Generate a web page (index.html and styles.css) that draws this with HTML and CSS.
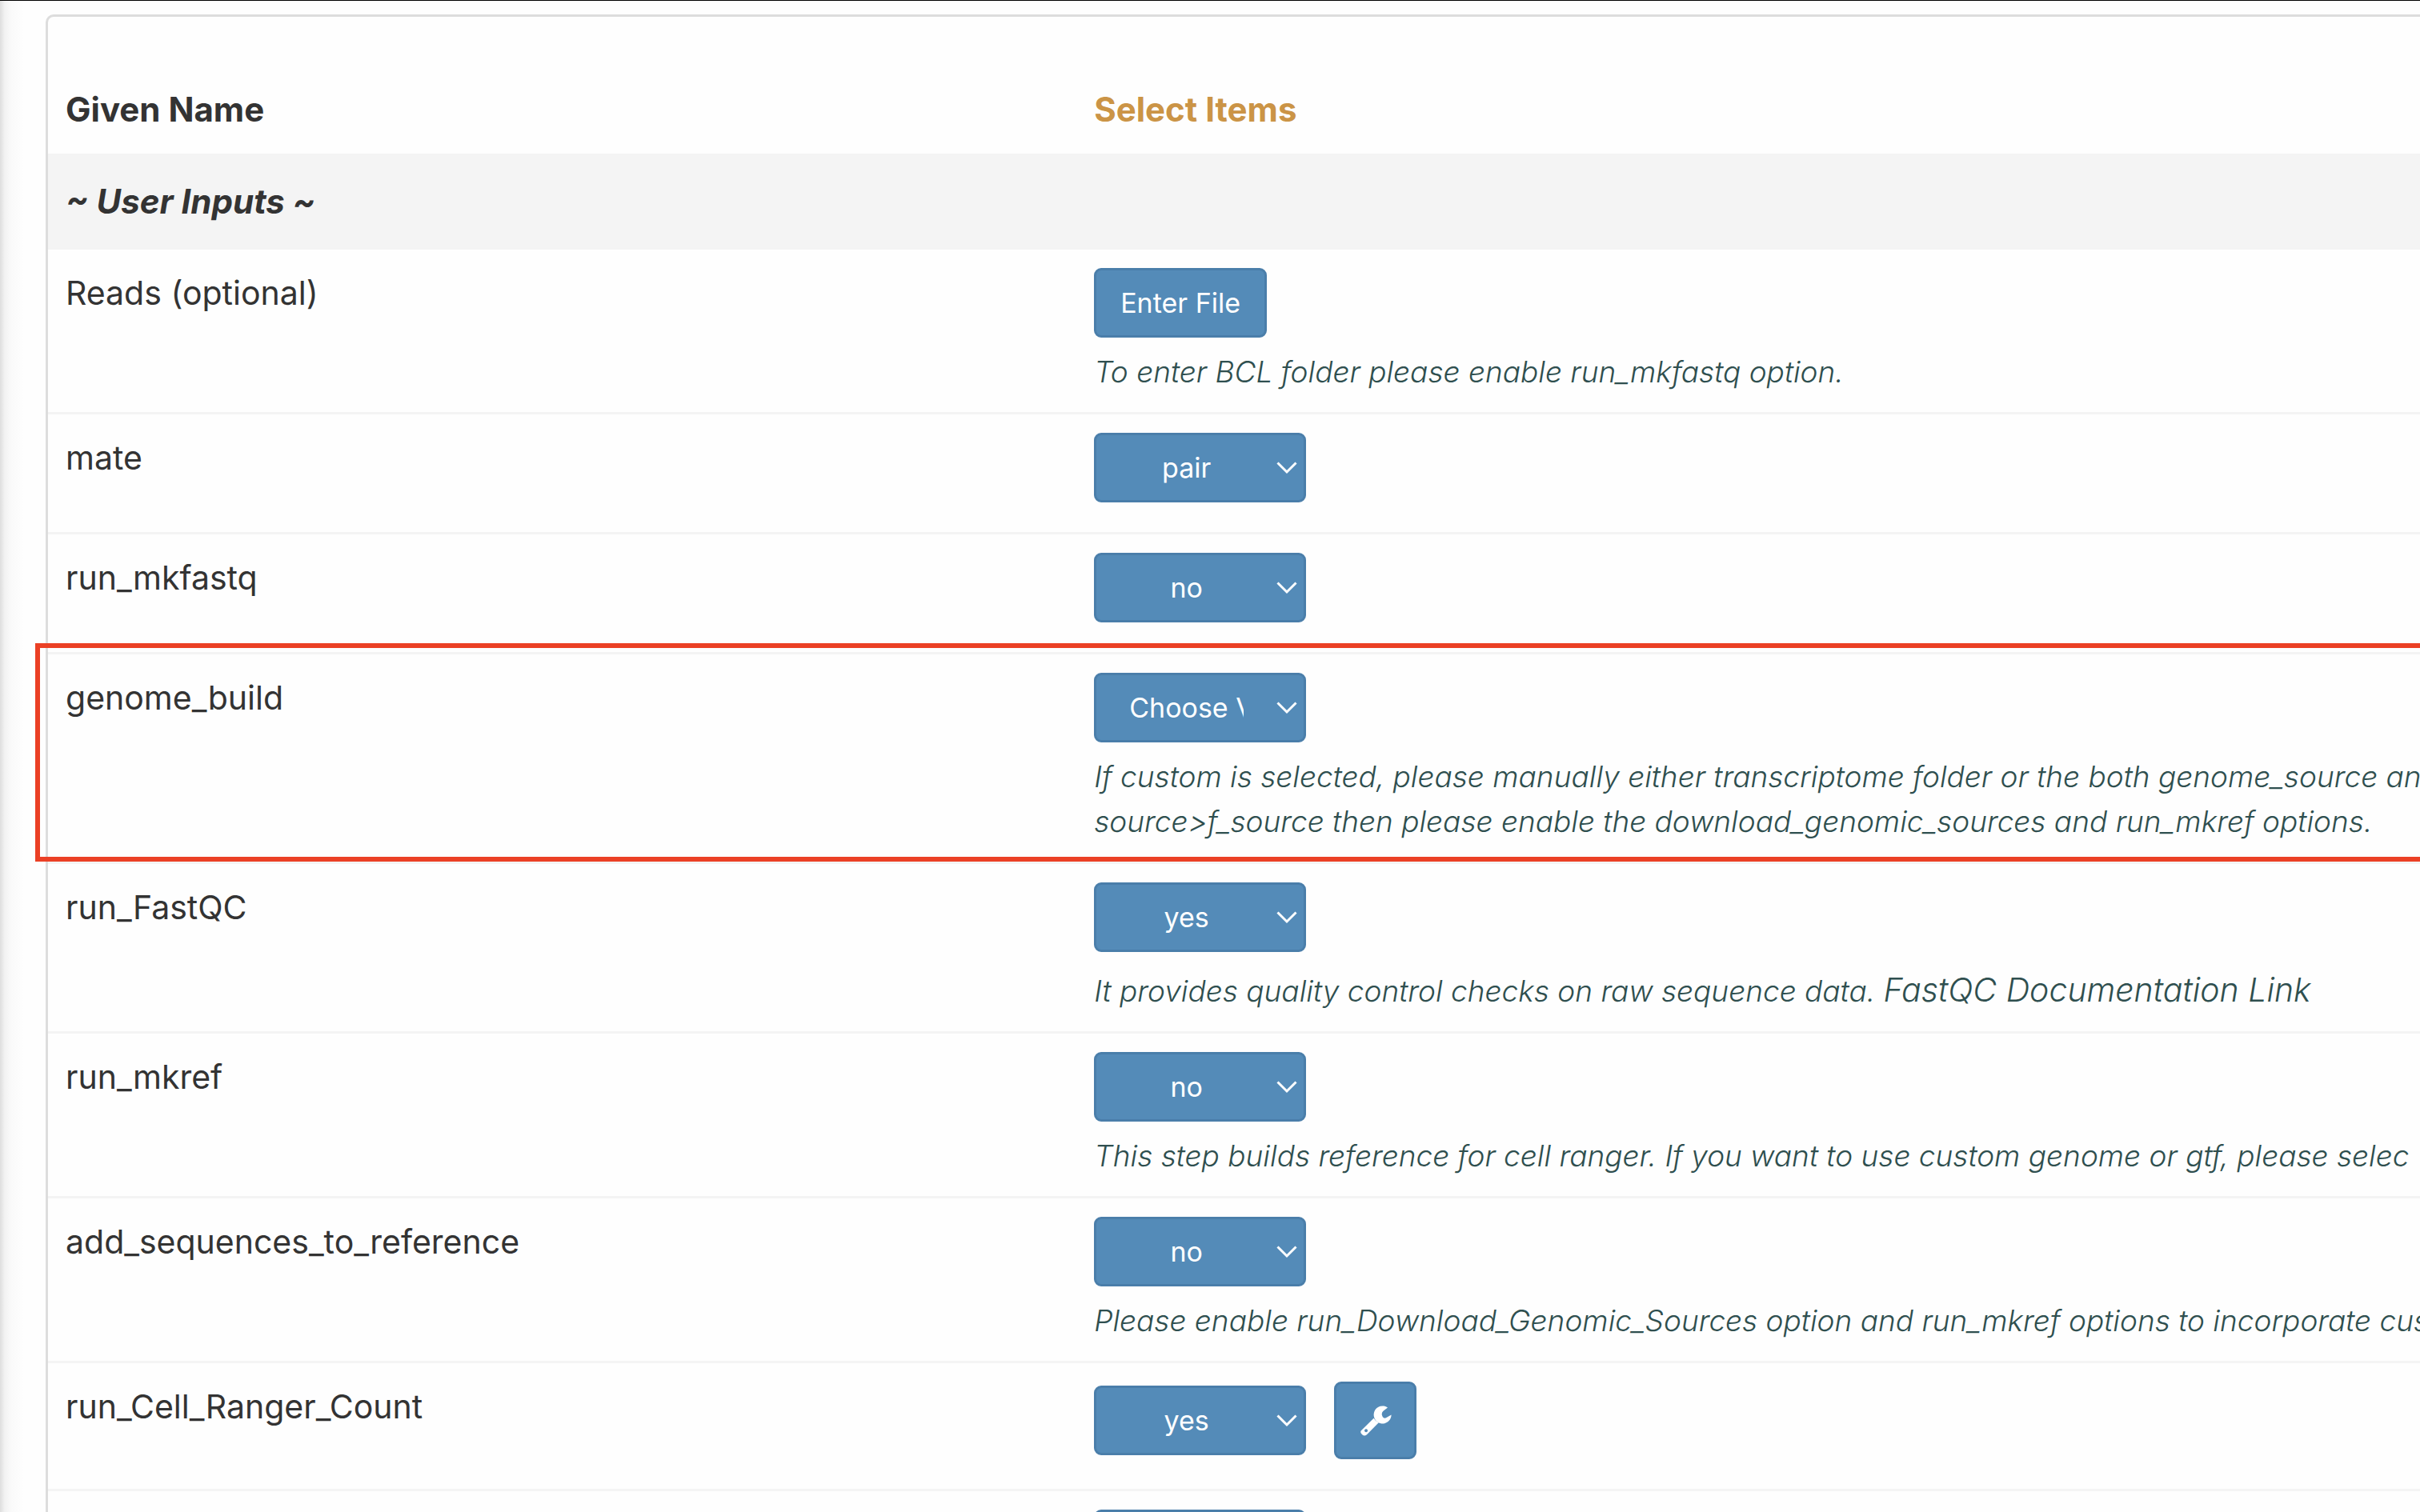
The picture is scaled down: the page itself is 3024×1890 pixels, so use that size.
FILE: index.html
```html
<!DOCTYPE html>
<html lang="en">
<head>
<meta charset="utf-8">
<title>Run inputs</title>
<link rel="stylesheet" href="styles.css">
</head>
<body>
<main class="page">
  <section class="panel">
    <table class="inputs">
      <colgroup><col class="col-name"><col></colgroup>
      <thead>
        <tr><th scope="col">Given Name</th><th scope="col" class="accent">Select Items</th></tr>
      </thead>
      <tbody>
        <tr class="group"><th colspan="2" scope="colgroup">~ User Inputs ~</th></tr>
        <tr>
          <td class="name"><label for="reads">Reads (optional)</label></td>
          <td>
            <div class="controls"><button class="btn" id="reads" type="button">Enter File</button></div>
            <p class="help">To enter BCL folder please enable run_mkfastq option.</p>
          </td>
        </tr>
        <tr>
          <td class="name"><label for="mate">mate</label></td>
          <td><div class="controls"><select class="btn select" id="mate"><option>pair</option></select></div></td>
        </tr>
        <tr>
          <td class="name"><label for="mkfastq">run_mkfastq</label></td>
          <td><div class="controls"><select class="btn select" id="mkfastq"><option>no</option></select></div></td>
        </tr>
        <tr class="highlight">
          <td class="name"><label for="genome">genome_build</label></td>
          <td>
            <div class="controls"><select class="btn select" id="genome"><option>Choose Value</option></select></div>
            <p class="help">If custom is selected, please manually either transcriptome folder or the both genome_source an<br>source&gt;f_source then please enable the download_genomic_sources and run_mkref options.</p>
          </td>
        </tr>
        <tr>
          <td class="name"><label for="fastqc">run_FastQC</label></td>
          <td>
            <div class="controls"><select class="btn select" id="fastqc"><option>yes</option></select></div>
            <p class="help help-tall">It provides quality control checks on raw sequence data. <a class="doc-link" href="#fastqc">FastQC Documentation Link</a></p>
          </td>
        </tr>
        <tr>
          <td class="name"><label for="mkref">run_mkref</label></td>
          <td>
            <div class="controls"><select class="btn select" id="mkref"><option>no</option></select></div>
            <p class="help">This step builds reference for cell ranger. If you want to use custom genome or gtf, please selec</p>
          </td>
        </tr>
        <tr>
          <td class="name"><label for="addseq">add_sequences_to_reference</label></td>
          <td>
            <div class="controls"><select class="btn select" id="addseq"><option>no</option></select></div>
            <p class="help">Please enable run_Download_Genomic_Sources option and run_mkref options to incorporate cus</p>
          </td>
        </tr>
        <tr>
          <td class="name"><label for="count">run_Cell_Ranger_Count</label></td>
          <td>
            <div class="controls">
              <select class="btn select" id="count"><option>yes</option></select>
              <button class="btn btn-icon" type="button" aria-label="Settings">
                <svg class="wrench" viewBox="0 0 40 40" aria-hidden="true">
                  <path fill="#fff" d="M35 3.500A11 11 0 1 0 39.600 12.500L33 16.300Q30.500 17.300 28.800 15.300L27.800 12.500Q27.300 9.800 29.500 7.800Z"/>
                  <path fill="#fff" fill-rule="evenodd" d="M17.600 16.800Q19.600 20.700 23.800 22.300L9 37.200Q6 39.900 3.200 37.200Q-.4 34 2.400 31.700ZM8 30.200a2 2 0 1 0 .1 0Z"/>
                </svg>
              </button>
            </div>
          </td>
        </tr>
        <tr>
          <td class="name"></td>
          <td><div class="controls"><select class="btn select" aria-label="Next option"><option></option></select></div></td>
        </tr>
      </tbody>
    </table>
  </section>
</main>
</body>
</html>
```
FILE: styles.css
```css
* {
  box-sizing: border-box;
}

html,
body {
  margin: 0;
  height: 100%;
  overflow: hidden;
}

body {
  background: #fefefe;
  color: #333;
  font-family: Inter, "Liberation Sans", sans-serif;
  font-size: 41px;
  line-height: 60px;
}

.page {
  height: 100%;
  padding: 17px 0 0 57px;
  border-top: 1px solid #000;
  background: linear-gradient(to right, #dedede, #f2f2f2 6px, #fafafa 14px, #fefefe 30px);
}

/* The panel runs on past the right edge of the window. */
.panel {
  width: 130vw;
  border: 3px solid #ddd;
  border-radius: 10px;
  background: #fefefe;
}

.inputs {
  width: 100%;
  table-layout: fixed;
  border-collapse: separate;
  border-spacing: 0;
}

.col-name {
  width: 42.5vw;
}

th,
td {
  padding: 23px 22px 22px;
  text-align: left;
  vertical-align: top;
}

th {
  font-size: 42px;
  font-weight: 700;
}

thead th {
  padding-top: 86px;
  padding-bottom: 25px;
}

.accent {
  color: #cb9446;
}

tbody th,
tbody td {
  border-top: 3px solid #f4f4f4;
}

.name {
  padding-top: 24px;
}

.group th {
  padding-top: 27px;
  padding-bottom: 27px;
  background: #f4f4f4;
  font-style: italic;
}

.highlight {
  position: relative;
}

.highlight .name::after {
  content: "";
  position: absolute;
  inset: -11px 0 0 -16px;
  border: 6px solid #eb4025;
  pointer-events: none;
}

.controls {
  display: flex;
  align-items: center;
  gap: 35px;
  margin-bottom: 15px;
}

.btn {
  height: 87px;
  padding: 0 30px;
  border: 3px solid #4a7eaa;
  border-radius: 9px;
  background-color: #548bb8;
  color: #fff;
  font-family: inherit;
  font-size: 34px;
}

.select {
  appearance: none;
  width: 265px;
  padding: 0 75px 0 41px;
  background-image: url("data:image/svg+xml,%3Csvg xmlns='http://www.w3.org/2000/svg' viewBox='0 0 26 16'%3E%3Cpath d='M1.500 1.500 13 13 24.500 1.500' fill='none' stroke='%23fff' stroke-width='3'/%3E%3C/svg%3E");
  background-repeat: no-repeat;
  background-position: right 8px center;
  background-size: 26px 16px;
  text-align: center;
  text-align-last: center;
}

.btn-icon {
  display: flex;
  align-items: center;
  justify-content: center;
  width: 103px;
  height: 97px;
  padding: 0;
}

.wrench {
  width: 40px;
  height: 40px;
}

.help {
  margin: 0;
  color: #2f4f4f;
  font-size: 37px;
  font-style: italic;
  font-weight: 300;
  line-height: 56px;
  white-space: nowrap;
}

.help-tall {
  padding-top: 4px;
}

.doc-link {
  color: inherit;
  font-size: 41px;
  line-height: 56px;
  text-decoration: none;
}
```
